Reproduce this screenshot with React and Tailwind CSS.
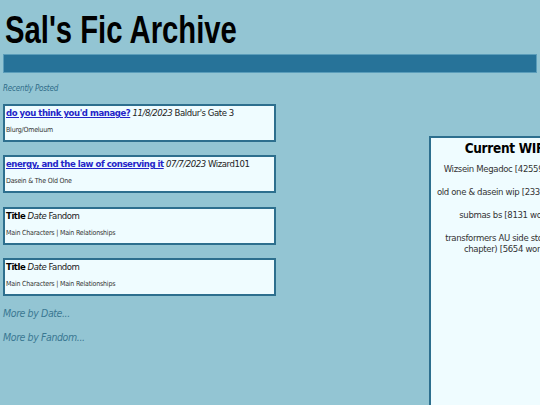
import React from "react";

const posts = [
  { title: "do you think you'd manage?", link: true, date: "11/8/2023", fandom: "Baldur's Gate 3", tags: "Blurg/Omeluum" },
  { title: "energy, and the law of conserving it", link: true, date: "07/7/2023", fandom: "Wizard101", tags: "Dasein & The Old One" },
  { title: "Title", link: false, date: "Date", fandom: "Fandom", tags: "Main Characters | Main Relationships" },
  { title: "Title", link: false, date: "Date", fandom: "Fandom", tags: "Main Characters | Main Relationships" },
];

const wips = [
  "Wizsein Megadoc [42559 words]",
  "old one & dasein wip [23321 words]",
  "submas bs [8131 words]",
  "transformers AU side story (first chapter) [5654 words]",
];

function PostCard({ post }) {
  return (
    <div className="border-2 border-[#2d6f8e] bg-[#effcff] px-[1px] h-[38px]">
      <div className="text-[9.5px] leading-[14px] tracking-[-0.45px] text-[#222] whitespace-nowrap">
        {post.link ? (
          <a href="#" className="font-bold text-[#2424c8] underline">{post.title}</a>
        ) : (
          <span className="font-bold text-black">{post.title}</span>
        )}{" "}
        <i>{post.date}</i> {post.fandom}
      </div>
      <div className="text-[7px] leading-[9px] tracking-[-0.2px] text-[#333] mt-[6px] whitespace-nowrap">{post.tags}</div>
    </div>
  );
}

export default function App() {
  return (
    <div
      className="h-screen w-full overflow-hidden bg-[#93c5d3]"
      style={{ fontFamily: '"DejaVu Sans Condensed", "DejaVu Sans", sans-serif' }}
    >
      <h1
        className="pl-[5px] pt-[9px] h-[54px] text-[39px] leading-[41px] font-bold text-black whitespace-nowrap"
        style={{ fontFamily: '"Liberation Sans", Arial, sans-serif' }}
      >
        <span className="inline-block origin-left scale-x-[0.75]">Sal's Fic Archive</span>
      </h1>
      <div className="mx-[3px] h-[19px] bg-[#277399] border border-[#5a9dba]" />

      <div className="flex">
        <div className="w-[276px] pl-[3px] shrink-0">
          <p className="mt-[10px] text-[8px] leading-[12px] italic tracking-[-0.2px] text-[#2e6c88]">Recently Posted</p>
          <div className="mt-[9px] flex flex-col gap-[13.3px]">
            {posts.map((p, i) => (
              <PostCard key={i} post={p} />
            ))}
          </div>
          <div className="mt-[11px] flex flex-col gap-[11px] text-[10.5px] leading-[13px] tracking-[-0.4px] italic text-[#3a7892]">
            <a href="#">More by Date...</a>
            <a href="#">More by Fandom...</a>
          </div>
        </div>

        <div className="ml-[153px] mt-[63px] w-[158px] shrink-0 h-[269px] border-2 border-b-0 border-[#2d6f8e] bg-[#effcff] text-center px-[4px]">
          <h2 className="text-[13.5px] leading-[18px] font-bold tracking-[-0.3px] text-black mt-[1px] whitespace-nowrap">Current WIPs</h2>
          <ul className="mt-[6px] flex flex-col gap-[12px] text-[9.5px] leading-[11px] tracking-[-0.35px] text-[#333]">
            {wips.map((w, i) => (
              <li key={i}>{w}</li>
            ))}
          </ul>
        </div>
      </div>
    </div>
  );
}
